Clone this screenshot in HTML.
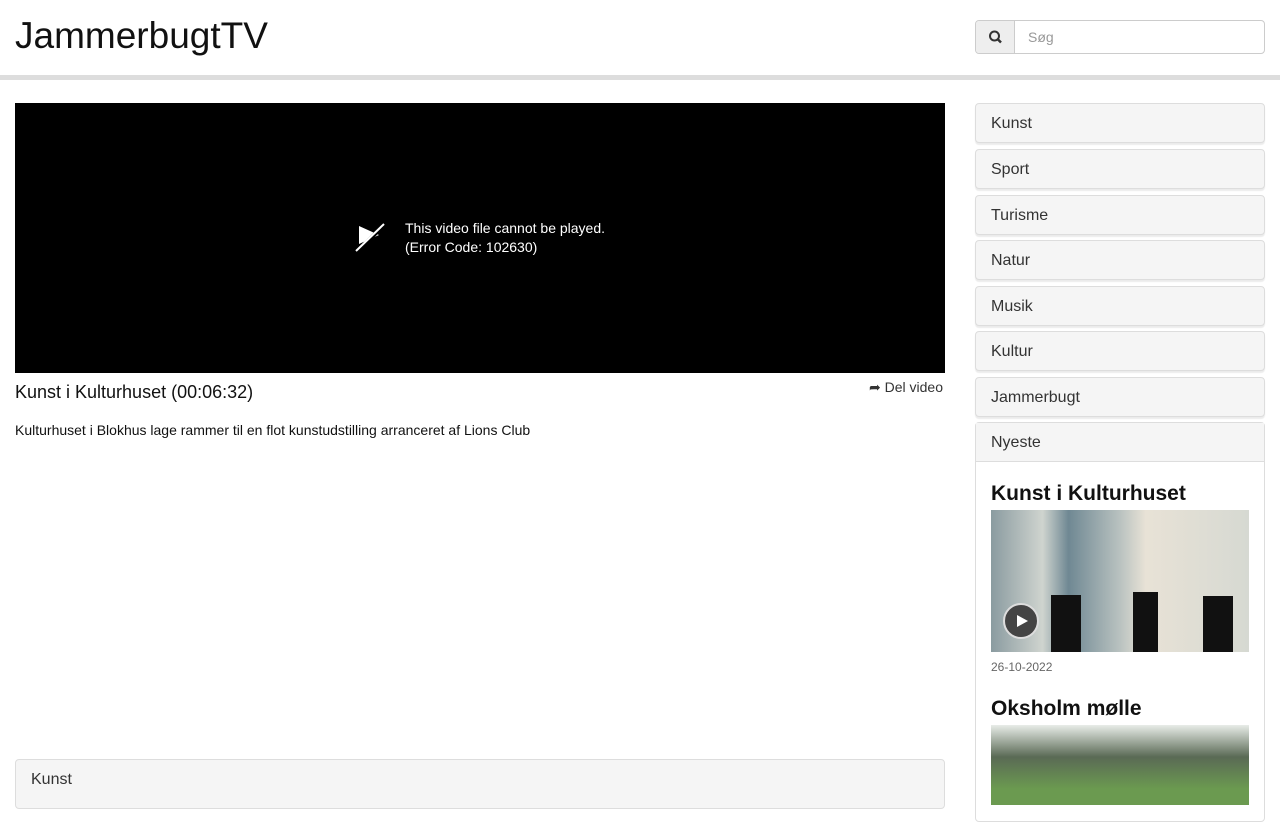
<!DOCTYPE html>
<html><head><meta charset="utf-8"><style>
*{box-sizing:border-box}
body{margin:0;font-family:"Liberation Sans",sans-serif;color:#333;background:#fff;width:1280px;height:800px;overflow:hidden;position:relative}
.hdr{position:absolute;left:0;top:0;width:1280px;border-bottom:5px solid #ddd;height:80px}
.logo{position:absolute;left:15px;top:15px;font-size:37px;color:#111}
.search{position:absolute;left:975px;top:20px;width:290px;height:34px;border:1px solid #ccc;border-radius:4px;overflow:hidden}
.search .ic{position:absolute;left:0;top:0;width:39px;height:32px;background:#eee;border-right:1px solid #ccc}
.search span{position:absolute;left:52px;top:8px;font-size:14px;color:#999}
.video{position:absolute;left:15px;top:103px;width:930px;height:270px;background:#000}
.err{position:absolute;left:390px;top:116px;color:#fff;font-size:14px;line-height:19px}
.title{position:absolute;left:15px;top:382px;font-size:18px;color:#111}
.share{position:absolute;left:869px;top:379px;font-size:14px;color:#333}
.desc{position:absolute;left:15px;top:422px;font-size:14px;color:#111}
.panel{position:absolute;left:975px;width:290px;height:40px;border:1px solid #ddd;border-radius:4px;background:#f5f5f5;box-shadow:0 2px 1px rgba(0,0,0,.08);font-size:16px;padding:11px 15px 9px;color:#333}
.nye{position:absolute;left:975px;top:422px;width:290px;height:400px;border:1px solid #ddd;border-radius:4px}
.nye .h{height:39px;background:#f5f5f5;border-bottom:1px solid #ddd;padding:11px 15px 9px;font-size:16px}
.nye h3{margin:0;position:absolute;left:15px;font-size:21px;color:#111}
.thumb{position:absolute;left:15px;width:258px}
.bot{position:absolute;left:15px;top:759px;width:930px;height:50px;border:1px solid #ddd;border-radius:4px;background:#f5f5f5;font-size:16px;padding:11px 15px}
</style></head><body>
<div class="hdr"><div class="logo">JammerbugtTV</div>
<div class="search"><div class="ic"><svg width="39" height="32" viewBox="0 0 39 32"><circle cx="18.5" cy="15" r="4.5" fill="none" stroke="#333" stroke-width="2"/><path d="M21.5 18l3.5 3.5" stroke="#333" stroke-width="2.5"/></svg></div><span>Søg</span></div></div>
<div class="video">
<svg style="position:absolute;left:340px;top:119px" width="32" height="32" viewBox="0 0 32 32"><path d="M4 4l20 9-20 9z" fill="#fff"/><path d="M2 30L30 2" stroke="#000" stroke-width="4"/><path d="M1 29L29 2" stroke="#fff" stroke-width="2"/></svg>
<div class="err">This video file cannot be played.<br>(Error Code: 102630)</div></div>
<div class="title">Kunst i Kulturhuset (00:06:32)</div>
<div class="share">➦ Del video</div>
<div class="desc">Kulturhuset i Blokhus lage rammer til en flot kunstudstilling arranceret af Lions Club</div>
<div class="panel" style="top:103px">Kunst</div>
<div class="panel" style="top:149px">Sport</div>
<div class="panel" style="top:195px">Turisme</div>
<div class="panel" style="top:240px">Natur</div>
<div class="panel" style="top:286px">Musik</div>
<div class="panel" style="top:331px">Kultur</div>
<div class="panel" style="top:377px">Jammerbugt</div>
<div class="nye"><div class="h">Nyeste</div>
<h3 style="top:59px">Kunst i Kulturhuset</h3>
<div class="thumb" style="top:87px;height:142px;background:linear-gradient(90deg,#8a9ba0 0,#cfd4cf 20%,#6f8893 30%,#b9c2c0 50%,#e8e2d6 60%,#d6d9d2 100%)">
<div style="position:absolute;left:60px;top:85px;width:30px;height:57px;background:#111"></div>
<div style="position:absolute;left:142px;top:82px;width:25px;height:60px;background:#111"></div>
<div style="position:absolute;left:212px;top:86px;width:30px;height:56px;background:#111"></div>
<div style="position:absolute;left:12px;top:93px;width:36px;height:36px;border-radius:50%;background:#444;border:2px solid #ddd"></div>
<div style="position:absolute;left:26px;top:105px;border-left:11px solid #fff;border-top:6px solid transparent;border-bottom:6px solid transparent"></div></div>
<div style="position:absolute;left:15px;top:237px;font-size:12px;color:#666">26-10-2022</div>
<h3 style="top:274px">Oksholm mølle</h3>
<div class="thumb" style="top:302px;height:80px;background:linear-gradient(180deg,#e8ece8 0,#5a6a55 40%,#6b9a50 80%)"></div>
</div>
<div class="bot">Kunst</div>
</body></html>
